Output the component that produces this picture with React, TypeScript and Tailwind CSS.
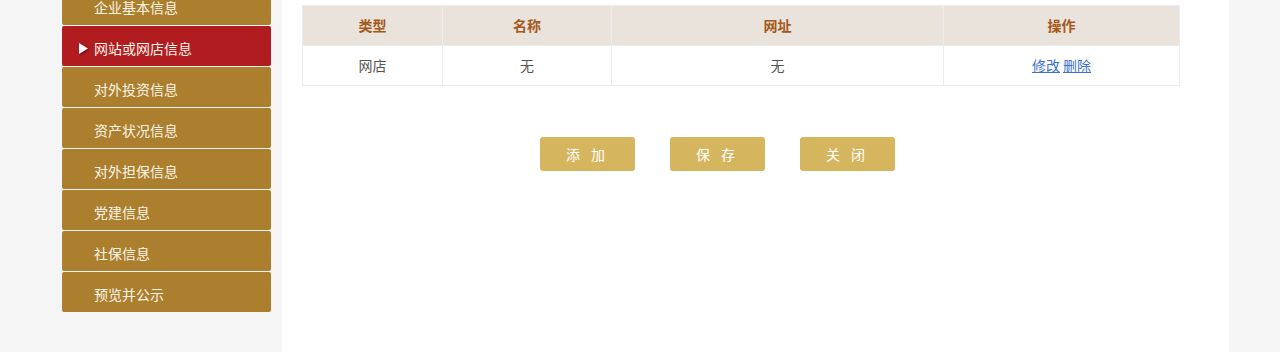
const menu = ['企业基本信息', '网站或网店信息', '对外投资信息', '资产状况信息', '对外担保信息', '党建信息', '社保信息', '预览并公示'];

const font = { fontFamily: '"Noto Sans CJK SC", "Noto Sans", sans-serif' };

export default function App() {
  return (
    <div className="h-[352px] w-[1280px] overflow-hidden bg-[#f5f5f5]" style={font}>
      <div className="flex h-full pl-[62px]">
        {/* 左側選單 */}
        <div className="-mt-[15px] flex w-[209px] flex-col gap-px">
          {menu.map((m, i) => {
            const active = i === 1;
            return (
              <div
                key={m}
                className={`flex h-[40px] items-center rounded-[2px] pt-[4px] text-[14px] text-[#fbf5e8] ${active ? 'bg-[#b01c20]' : 'bg-[#ac7f2e]'}`}
              >
                <span className="flex w-[32px] justify-end pr-[6px]">
                  {active && (
                    <svg width="9" height="11" viewBox="0 0 9 11" className="drop-shadow-[1px_1px_1px_rgba(0,0,0,0.45)]">
                      <path d="M0 0 L9 5.5 L0 11 Z" fill="#fff" />
                    </svg>
                  )}
                </span>
                <span>{m}</span>
              </div>
            );
          })}
        </div>

        {/* 主內容 */}
        <div className="ml-[11px] h-full w-[947px] bg-white pl-[20px] pt-[5px]">
          <table className="w-[877px] table-fixed border-collapse text-[14px]">
            <colgroup>
              <col className="w-[140px]" />
              <col className="w-[169px]" />
              <col className="w-[332px]" />
              <col className="w-[236px]" />
            </colgroup>
            <thead>
              <tr className="h-[40px] bg-[#e9e3db] text-[#a4581a]">
                {['类型', '名称', '网址', '操作'].map((h) => (
                  <th key={h} className="border border-[#ececec] font-bold">{h}</th>
                ))}
              </tr>
            </thead>
            <tbody>
              <tr className="h-[40px] text-center text-[#555]">
                <td className="border border-[#ececec]">网店</td>
                <td className="border border-[#ececec]">无</td>
                <td className="border border-[#ececec]">无</td>
                <td className="border border-[#ececec]">
                  <a href="#" className="text-[#3a6fd0] underline">修改</a>{' '}
                  <a href="#" className="text-[#3a6fd0] underline">删除</a>
                </td>
              </tr>
            </tbody>
          </table>

          <div className="ml-[238px] mt-[51px] flex gap-[35px]">
            {['添 加', '保 存', '关 闭'].map((b) => (
              <button
                key={b}
                className="h-[34px] w-[95px] rounded-[3px] bg-[#d6b55f] text-[14px] tracking-[4px] text-white"
              >
                {b}
              </button>
            ))}
          </div>
        </div>
      </div>
    </div>
  );
}
